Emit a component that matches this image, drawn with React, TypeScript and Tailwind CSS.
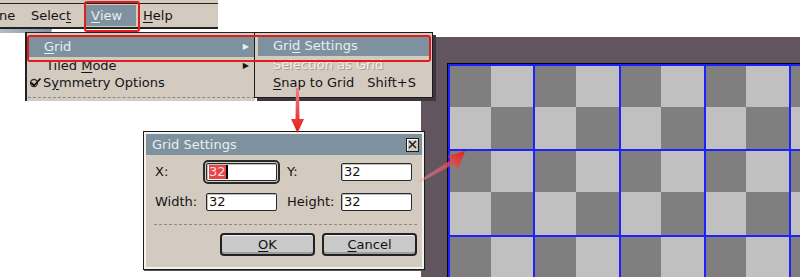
import React from "react";

const DARK = "bg-[#7f7f7f]";
const LIGHT = "bg-[#c0c0c0]";

function Checker() {
  const cells: React.ReactNode[] = [];
  for (let r = 0; r < 5; r++) {
    for (let c = 0; c < 9; c++) {
      cells.push(
        <div
          key={`${r}-${c}`}
          className={(r + c) % 2 === 0 ? DARK : LIGHT}
        />,
      );
    }
  }
  const step = 85.3;
  return (
    <div className="absolute left-[26px] top-[26px] border-l border-t border-black">
      <div className="grid grid-cols-[repeat(9,42.65px)] auto-rows-[42.65px]">
        {cells}
      </div>
      {[0, 1, 2, 3, 4].map((i) => (
        <div
          key={`v${i}`}
          className="absolute top-0 h-[230px] w-[2px] bg-[#2020ff]"
          style={{ left: i * step }}
        />
      ))}
      {[0, 1, 2].map((i) => (
        <div
          key={`h${i}`}
          className="absolute left-0 h-[2px] w-[360px] bg-[#2020ff]"
          style={{ top: i * step }}
        />
      ))}
    </div>
  );
}

function Field({ focused }: { focused?: boolean }) {
  return (
    <div
      className={
        focused
          ? "flex h-[18px] w-[71px] items-center rounded-[2px] border border-[#2a2a2a] bg-white pl-[2px] outline-2 outline-offset-1 outline-solid outline-[#2a2a2a] shadow-[inset_1px_1px_0_#bdbdbd]"
          : "flex h-[18px] w-[71px] items-center rounded-[2px] border border-[#2a2a2a] bg-white pl-[2px] shadow-[inset_1px_1px_0_#bdbdbd]"
      }
    >
      {focused ? (
        <>
          <span className="bg-[#e34848] leading-[14px] text-[#ffd9d9]">32</span>
          <span className="h-[14px] w-[2px] bg-black" />
        </>
      ) : (
        <span className="leading-[14px] text-[#111]">32</span>
      )}
    </div>
  );
}

function Button({ children }: { children: React.ReactNode }) {
  return (
    <div className="flex h-[23px] w-[95px] items-center justify-center rounded-[4px] border-2 border-[#222] bg-[#c9c9c9] text-[#111] shadow-[inset_0_1px_0_#f2f2f2,inset_0_-2px_0_#9e9e9e]">
      {children}
    </div>
  );
}

function Check() {
  return (
    <svg width="13" height="11" viewBox="0 0 13 11" className="mr-[1px]">
      <circle cx="5" cy="6" r="3.5" fill="none" stroke="#333" strokeWidth="1.3" />
      <path d="M2 5.5 L5 8.5 L11.5 1.5" fill="none" stroke="#111" strokeWidth="1.8" />
    </svg>
  );
}

export default function App() {
  return (
    <div className="relative h-[277px] w-[800px] overflow-hidden bg-white font-['DejaVu_Sans',sans-serif] text-[13px] leading-[18px] text-[#141414]">
      {/* canvas */}
      <div className="absolute bottom-0 left-[421px] right-0 top-[37px] bg-[#625560]">
        <Checker />
      </div>

      {/* menu bar */}
      <div className="absolute left-0 top-0 h-[29px] w-[218px] bg-[#d3cbc0] pt-[3px]">
        <div className="flex h-full items-stretch border-b-2 border-t border-[#222]">
          <div className="flex w-[24px] items-center overflow-hidden">
            <span className="-ml-[1px]">ne</span>
          </div>
          <div className="flex w-[62px] items-center pl-[7px]">
            Selec<u className="underline-offset-2">t</u>
          </div>
          <div className="my-[1px] flex w-[50px] items-center bg-[#7d929e] pl-[5px] text-[#e8eef1]">
            <u className="underline-offset-2">V</u>iew
          </div>
          <div className="flex items-center pl-[7px]">
            <u className="underline-offset-2">H</u>elp
          </div>
        </div>
      </div>
      <div className="absolute left-0 top-[29px] h-[4px] w-[52px] rounded-br-sm bg-gradient-to-r from-[#aebcc6] to-[#8395a2]" />

      {/* view menu */}
      <div className="absolute left-[25px] top-[32px] h-[69px] w-[230px] border-l-2 border-t border-[#222] bg-[#d3cbc0] pl-[1px] pt-[3px]">
        <div className="flex h-[21px] items-center justify-between bg-[#7d929e] pl-[16px] pr-[6px] text-[#e8eef1]">
          <span>
            <u className="underline-offset-2">G</u>rid
          </span>
          <span className="text-[8px]">▶</span>
        </div>
        <div className="flex h-[17px] items-center justify-between pl-[18px] pr-[6px]">
          <span>
            Tiled <u className="underline-offset-2">M</u>ode
          </span>
          <span className="text-[8px]">▶</span>
        </div>
        <div className="flex h-[17px] items-center pl-[1px]">
          <Check />
          <span>
            S<u className="underline-offset-2">y</u>mmetry Options
          </span>
        </div>
        <div className="mt-[6px] border-t border-dashed border-[#8f887f]" />
      </div>

      {/* grid submenu */}
      <div className="absolute left-[254px] top-[32px] h-[66px] w-[179px] border border-[#1c1c1c] bg-[#d3cbc0] p-[3px] shadow-[3px_3px_0_#3e363c]">
        <div className="flex h-[20px] items-center bg-[#7d929e] pl-[15px] text-[#e8eef1]">
          Gri<u className="underline-offset-2">d</u>&nbsp;Settings
        </div>
        <div className="flex h-[18px] items-center pl-[15px] text-[#f3efe9] [text-shadow:1px_1px_0_#a39c93]">
          Selection as Grid
        </div>
        <div className="flex h-[18px] items-center justify-between pl-[15px] pr-[13px]">
          <span>
            <u className="underline-offset-2">S</u>nap to Grid
          </span>
          <span>Shift+S</span>
        </div>
      </div>

      {/* dialog */}
      <div className="absolute left-[143px] top-[131px] h-[139px] w-[282px] border border-[#1c1c1c] bg-[#f4f1ec] p-[2px] shadow-[1px_1px_0_#555]">
        <div className="flex h-full flex-col bg-[#d3cbc0]">
          <div className="flex h-[21px] shrink-0 items-center justify-between bg-[#7d929e] pl-[6px] pr-[3px] text-[#e8eef1]">
            <span>Grid Settings</span>
            <div className="flex h-[14px] w-[13px] items-center justify-center border border-[#1c1c1c] bg-[#d3cbc0] shadow-[inset_1px_1px_0_#fff]">
              <svg width="9" height="9" viewBox="0 0 9 9">
                <path d="M1 1 L8 8 M8 1 L1 8" stroke="#1c1c1c" strokeWidth="1.5" />
              </svg>
            </div>
          </div>
          <div className="flex items-center pl-[9px] pt-[8px]">
            <span className="w-[51px]">X:</span>
            <Field focused />
            <span className="ml-[10px] w-[54px]">Y:</span>
            <Field />
          </div>
          <div className="mt-[12px] flex items-center pl-[9px]">
            <span className="w-[51px]">Width:</span>
            <Field />
            <span className="ml-[10px] w-[54px]">Height:</span>
            <Field />
          </div>
          <div className="ml-[8px] mr-[5px] mt-[13px] border-t border-dashed border-[#8f887f]" />
          <div className="mt-[8px] flex justify-end gap-[7px] pr-[5px]">
            <Button>
              <u className="underline-offset-2">O</u>K
            </Button>
            <Button>
              <u className="underline-offset-2">C</u>ancel
            </Button>
          </div>
        </div>
      </div>

      {/* annotations */}
      <div className="absolute left-[84px] top-[1px] h-[31px] w-[56px] rounded-[3px] border-2 border-[#e41b1b]" />
      <div className="absolute left-[27px] top-[35px] h-[27px] w-[404px] rounded-[3px] border-2 border-[#e41b1b]" />
      <svg className="absolute left-0 top-0" width="800" height="277" viewBox="0 0 800 277">
        <defs>
          <linearGradient id="a1" x1="0" y1="0" x2="0" y2="1">
            <stop offset="0" stopColor="#f08080" />
            <stop offset="1" stopColor="#e41b1b" />
          </linearGradient>
          <linearGradient id="a2" x1="0" y1="1" x2="1" y2="0">
            <stop offset="0" stopColor="#f3a0a0" stopOpacity="0.4" />
            <stop offset="1" stopColor="#e41b1b" />
          </linearGradient>
        </defs>
        <path d="M296 88 L299 88 L299.5 119 L304 119 L297.5 133 L291 119 L295.5 119 Z" fill="url(#a1)" />
        <path d="M418 181 L451 160 L448 156 L465 151 L458 170 L454 164 L419 183 Z" fill="url(#a2)" />
      </svg>
    </div>
  );
}
